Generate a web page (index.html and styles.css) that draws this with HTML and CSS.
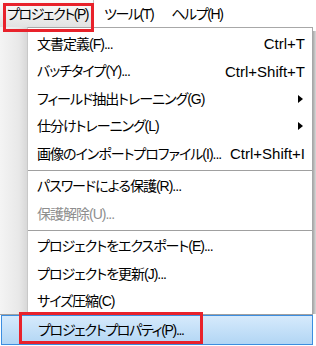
FILE: index.html
```html
<!DOCTYPE html>
<html lang="ja">
<head>
<meta charset="utf-8">
<link rel="stylesheet" href="styles.css">
</head>
<body>
<div class="screen">
  <div class="menubar">
    <div class="mb-item active">プロジェクト(P)</div>
    <div class="mb-item">ツール(T)</div>
    <div class="mb-item">ヘルプ(H)</div>
  </div>
  <div class="dropzone">
    <div class="gutter"></div>
    <div class="menu">
      <div class="row"><span>文書定義(F)...</span><span class="key">Ctrl+T</span></div>
      <div class="row"><span>バッチタイプ(Y)...</span><span class="key">Ctrl+Shift+T</span></div>
      <div class="row"><span>フィールド抽出トレーニング(G)</span><span class="arrow"></span></div>
      <div class="row"><span>仕分けトレーニング(L)</span><span class="arrow"></span></div>
      <div class="row"><span>画像のインポートプロファイル(I)...</span><span class="key">Ctrl+Shift+I</span></div>
      <div class="sep"></div>
      <div class="row"><span>パスワードによる保護(R)...</span></div>
      <div class="row disabled"><span>保護解除(U)...</span></div>
      <div class="sep"></div>
      <div class="row"><span>プロジェクトをエクスポート(E)...</span></div>
      <div class="row"><span>プロジェクトを更新(J)...</span></div>
      <div class="row"><span>サイズ圧縮(C)</span></div>
    </div>
    <div class="shadow"></div>
  </div>
  <div class="selected-wrap">
    <div class="selected"><span>プロジェクトプロパティ(P)...</span></div>
  </div>
  <div class="mark mark-top"></div>
  <div class="mark mark-bottom"></div>
</div>
</body>
</html>
```
FILE: styles.css
```css
* { box-sizing: border-box; }
html, body { margin: 0; padding: 0; background: #fff; }
body {
  font-family: "Liberation Sans", "Noto Sans CJK JP", sans-serif;
  font-size: 14px;
  letter-spacing: -1px;
  color: #000;
  font-feature-settings: "palt" 1;
}
.screen {
  position: relative;
  width: 316px;
  height: 346px;
  overflow: hidden;
  background: #fff;
}
.menubar {
  display: flex;
  height: 27px;
  align-items: stretch;
  letter-spacing: -1.4px;
}
.mb-item {
  display: flex;
  align-items: center;
  padding: 0 8px 0 10px;
  line-height: 1;
  white-space: nowrap;
}
.mb-item.active {
  width: 94px;
  padding: 0 0 0 7px;
  background: linear-gradient(#fcfcfc, #e2e2e2);
  border-right: 1px solid #c4c4c4;
}
.dropzone {
  display: flex;
  height: 287px;
}
.gutter {
  width: 27px;
  background: linear-gradient(to right, #f4f4f4, #e8e8e8 70%, #d8d8d8);
}
.menu {
  width: 286px;
  border-top: 1px solid #a8a8a8;
  border-left: 1px solid #c8c8c8;
  border-right: 1px solid #a8a8a8;
  padding-top: 2px;
  background: #fff;
}
.row {
  height: 27.5px;
  display: flex;
  align-items: center;
  justify-content: space-between;
  padding: 0 7px 0 9px;
  white-space: nowrap;
  line-height: 1;
}
.row.disabled { color: #8e8e8e; }
.key {
  font-size: 15px;
  letter-spacing: 0;
}
.arrow {
  width: 0;
  height: 0;
  margin-right: 2px;
  border-left: 5px solid #000;
  border-top: 4px solid transparent;
  border-bottom: 4px solid transparent;
}
.sep {
  height: 1px;
  margin: 2px 0 2px 0;
  background: #a0a0a0;
}
.shadow {
  width: 3px;
  margin-top: 4px;
  background: linear-gradient(to right, #a9a9a9, #d9d9d9);
}
.selected-wrap {
  width: 313px;
  border-top: 1px solid #a0a0a0;
}
.selected {
  height: 30px;
  margin-left: 1px;
  display: flex;
  align-items: center;
  padding-left: 36px;
  border: 1px solid #3c8ee0;
  background: linear-gradient(#d6eafc, #b2d6f4);
  white-space: nowrap;
  line-height: 1;
  letter-spacing: -1.3px;
}
.mark {
  position: absolute;
  border: 3px solid #e8222b;
}
.mark-top { left: 3px; top: 3px; width: 91px; height: 29px; }
.mark-bottom { left: 19px; top: 312px; width: 184px; height: 32px; }
```
